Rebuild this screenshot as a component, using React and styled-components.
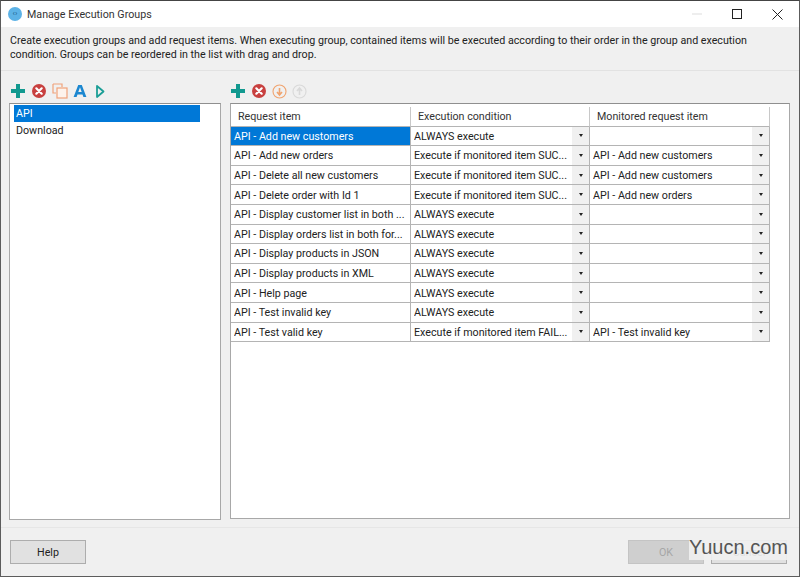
import React from "react";
import styled, { createGlobalStyle } from "styled-components";

const GlobalStyle = createGlobalStyle`
  html, body {
    margin: 0;
    padding: 0;
    background: #f0f0f0;
  }
  * {
    box-sizing: border-box;
  }
`;

const rows = [
  ["API - Add new customers", "ALWAYS execute", ""],
  ["API - Add new orders", "Execute if monitored item SUC...", "API - Add new customers"],
  ["API - Delete all new customers", "Execute if monitored item SUC...", "API - Add new customers"],
  ["API - Delete order with Id 1", "Execute if monitored item SUC...", "API - Add new orders"],
  ["API - Display customer list in both ...", "ALWAYS execute", ""],
  ["API - Display orders list in both for...", "ALWAYS execute", ""],
  ["API - Display products in JSON", "ALWAYS execute", ""],
  ["API - Display products in XML", "ALWAYS execute", ""],
  ["API - Help page", "ALWAYS execute", ""],
  ["API - Test invalid key", "ALWAYS execute", ""],
  ["API - Test valid key", "Execute if monitored item FAIL...", "API - Test invalid key"],
];

const Window = styled.div`
  position: relative;
  width: 800px;
  height: 577px;
  display: flex;
  flex-direction: column;
  background: #f0f0f0;
  border: 1px solid #5c5c5c;
  border-top-color: #444;
  font-family: "Roboto", "Open Sans", sans-serif;
  font-size: 10.7px;
  color: #222;
  overflow: hidden;
`;

const TitleBar = styled.div`
  height: 26px;
  flex: none;
  display: flex;
  align-items: center;
  background: #fff;
  padding: 0 2px 0 7px;
`;

const AppIcon = styled.div`
  width: 14px;
  height: 14px;
  border-radius: 50%;
  background: #5cb2e6;
  display: flex;
  align-items: center;
  justify-content: center;
  margin-right: 5px;
  color: #1d5f8c;
  font-size: 8px;
  line-height: 1;
`;

const Title = styled.span`
  flex: 1;
  color: #333;
`;

const WinButton = styled.div`
  width: 40px;
  height: 26px;
  display: flex;
  align-items: center;
  justify-content: center;
`;

const Intro = styled.div`
  height: 44px;
  flex: none;
  padding: 6.5px 9px 0;
  line-height: 14px;
  border-bottom: 1px solid #e2e2e2;
  white-space: nowrap;
`;

const Body = styled.div`
  flex: 1;
  display: flex;
  gap: 9px;
  padding: 10px 9px 7px 8px;
  min-height: 0;
`;

const Column = styled.div`
  display: flex;
  flex-direction: column;
  width: ${(p) => p.$width}px;
`;

const Toolbar = styled.div`
  height: 22px;
  flex: none;
  display: flex;
  align-items: center;
  gap: 5px;
  padding: 0 0 2px ${(p) => p.$inset}px;
`;

const Panel = styled.div`
  flex: 1;
  background: #fff;
  border: 1px solid #a8a8a8;
  border-top-color: #8f8f8f;
`;

const GroupList = styled(Panel)`
  padding: 1px 20px 0 4px;
`;

const GroupItem = styled.div`
  height: 17px;
  line-height: 17px;
  padding-left: 2px;
  background: ${(p) => (p.$selected ? "#0078d7" : "transparent")};
  color: ${(p) => (p.$selected ? "#fff" : "#222")};
`;

const TablePanel = styled(Panel)`
  padding: 3px 20px 0 0;
  margin-bottom: 1px;
`;

const Table = styled.div`
  display: grid;
  grid-template-columns: 180px 179px 180px;
  grid-auto-rows: 19.6px;
`;

const HeaderCell = styled.div`
  display: flex;
  align-items: center;
  padding: 1px 0 0 7px;
  border-right: 1px solid #c8c8c8;
  border-bottom: 1px solid #b4b4b4;
  background: #fff;
  color: #333;
`;

const Cell = styled.div`
  display: flex;
  align-items: center;
  padding-left: 3px;
  min-width: 0;
  white-space: nowrap;
  overflow: hidden;
  border-right: 1px solid #b4b4b4;
  border-bottom: 1px solid #b4b4b4;
  background: ${(p) => (p.$selected ? "#0078d7" : "#fff")};
  color: ${(p) => (p.$selected ? "#fff" : "#222")};
`;

const CellText = styled.span`
  flex: 1;
  min-width: 0;
  padding-top: 1px;
  overflow: hidden;
`;

const DropButton = styled.span`
  width: 17px;
  height: 100%;
  flex: none;
  display: flex;
  align-items: center;
  justify-content: center;
  background: #f0f0f0;

  &::after {
    content: "";
    border-left: 2.5px solid transparent;
    border-right: 2.5px solid transparent;
    border-top: 3px solid #222;
  }
`;

const Footer = styled.div`
  height: 49px;
  flex: none;
  display: flex;
  justify-content: space-between;
  padding: 12px 12px 0 9px;
  border-top: 1px solid #e6e6e6;
`;

const Button = styled.div`
  width: 76px;
  height: 24px;
  display: flex;
  align-items: center;
  justify-content: center;
  background: ${(p) => (p.$disabled ? "#cfcfcf" : "#e1e1e1")};
  border: 1px solid ${(p) => (p.$disabled ? "#c4c4c4" : "#adadad")};
  color: ${(p) => (p.$disabled ? "#a6a6a6" : "#222")};
`;

const FooterRight = styled.div`
  display: flex;
  gap: 7px;
`;

const Watermark = styled.div`
  position: absolute;
  left: 688px;
  top: 534px;
  width: 100px;
  height: 25px;
  font-family: "Liberation Sans", sans-serif;
  font-size: 20px;
  color: #555;
  background: rgba(240, 240, 240, 0.92);
  line-height: 25px;
`;

const PlusIcon = () => (
  <svg width="16" height="16" viewBox="0 0 16 16">
    <path d="M6 1h4v5h5v4h-5v5H6v-5H1V6h5z" fill="#12998f" />
  </svg>
);

const RemoveIcon = () => (
  <svg width="16" height="16" viewBox="0 0 16 16">
    <circle cx="8" cy="8" r="7" fill="#c8403f" />
    <path d="M5.3 5.3l5.4 5.4M10.7 5.3l-5.4 5.4" stroke="#fff" strokeWidth="2.2" strokeLinecap="round" />
  </svg>
);

const CopyIcon = () => (
  <svg width="16" height="16" viewBox="0 0 16 16" fill="none" stroke="#f0a27a" strokeWidth="1.2">
    <path d="M1 1h9v3M1 1v9h3" />
    <rect x="5" y="5" width="10" height="10" fill="#fdf3ec" />
  </svg>
);

const LetterIcon = () => (
  <svg width="14" height="14" viewBox="0 0 14 14">
    <path
      d="M5.2 1h3.6L13.4 13h-3l-.9-2.6H4.5L3.6 13h-3zM5.3 8h3.4L7 3.2z"
      fill="#1b87d0"
      fillRule="evenodd"
    />
  </svg>
);

const PlayIcon = () => (
  <svg width="13" height="15" viewBox="0 0 13 15" fill="none">
    <path d="M5 2l6.5 5.5L5 13z" stroke="#1b9e96" strokeWidth="1.8" strokeLinejoin="round" />
  </svg>
);

const ArrowCircleIcon = ({ color, up }) => (
  <svg width="15" height="15" viewBox="0 0 15 15" fill="none">
    <circle cx="7.5" cy="7.5" r="6.5" stroke={color} strokeWidth="1.1" />
    <path
      d={up ? "M7.5 11V5M5 7l2.5-3L10 7" : "M7.5 4v6M5 8l2.5 3L10 8"}
      stroke={color}
      strokeWidth="1.6"
    />
  </svg>
);

function App() {
  return (
    <Window>
      <GlobalStyle />
      <TitleBar>
        <AppIcon>‹›</AppIcon>
        <Title>Manage Execution Groups</Title>
        <WinButton>
          <svg width="10" height="10" viewBox="0 0 10 10">
            <path d="M0 5h10" stroke="#ddd" />
          </svg>
        </WinButton>
        <WinButton>
          <svg width="10" height="10" viewBox="0 0 10 10" fill="none">
            <rect x="0.5" y="0.5" width="9" height="9" stroke="#222" />
          </svg>
        </WinButton>
        <WinButton>
          <svg width="11" height="11" viewBox="0 0 11 11">
            <path d="M.5.5l10 10M10.5.5l-10 10" stroke="#222" />
          </svg>
        </WinButton>
      </TitleBar>
      <Intro>
        Create execution groups and add request items. When executing group, contained items will be
        executed according to their order in the group and execution
        <br />
        condition. Groups can be reordered in the list with drag and drop.
      </Intro>
      <Body>
        <Column $width={212}>
          <Toolbar $inset={1}>
            <PlusIcon />
            <RemoveIcon />
            <CopyIcon />
            <LetterIcon />
            <PlayIcon />
          </Toolbar>
          <GroupList>
            <GroupItem $selected>API</GroupItem>
            <GroupItem>Download</GroupItem>
          </GroupList>
        </Column>
        <Column $width={560}>
          <Toolbar $inset={0}>
            <PlusIcon />
            <RemoveIcon />
            <ArrowCircleIcon color="#f0a36e" />
            <ArrowCircleIcon color="#d9d9d9" up />
          </Toolbar>
          <TablePanel>
            <Table>
              <HeaderCell>Request item</HeaderCell>
              <HeaderCell>Execution condition</HeaderCell>
              <HeaderCell>Monitored request item</HeaderCell>
              {rows.map((r, i) => (
                <React.Fragment key={r[0]}>
                  <Cell $selected={i === 0}>
                    <CellText>{r[0]}</CellText>
                  </Cell>
                  <Cell>
                    <CellText>{r[1]}</CellText>
                    <DropButton />
                  </Cell>
                  <Cell>
                    <CellText>{r[2]}</CellText>
                    <DropButton />
                  </Cell>
                </React.Fragment>
              ))}
            </Table>
          </TablePanel>
        </Column>
      </Body>
      <Footer>
        <Button>Help</Button>
        <FooterRight>
          <Button $disabled>OK</Button>
          <Button>Cancel</Button>
        </FooterRight>
      </Footer>
      <Watermark>Yuucn.com</Watermark>
    </Window>
  );
}

export default App;
